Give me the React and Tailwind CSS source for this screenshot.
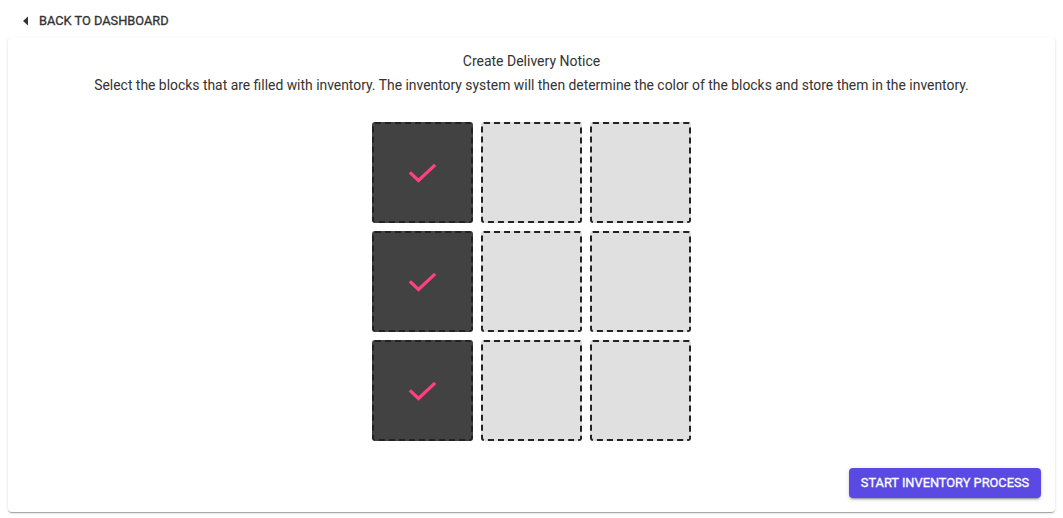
import React from "react";

const blocks = [true, false, false, true, false, false, true, false, false];

function Check() {
  return (
    <svg width="30" height="24" viewBox="0 0 30 24" fill="none">
      <path d="M3 12.5 L10.5 19.5 L26 5" stroke="#ff4081" strokeWidth="3.2" strokeLinecap="square" />
    </svg>
  );
}

export default function App() {
  return (
    <div className="min-h-[518px] bg-white px-2 pb-[6px] font-['Roboto','Liberation_Sans',sans-serif]">
      {/* back link */}
      <div className="h-[37px] pt-[4px] flex items-center">
        <button className="flex items-center gap-[8px] pl-[13px] pr-2 h-[30px] text-[12.8px] font-normal uppercase tracking-normal text-[#333] [-webkit-text-stroke:0.3px_#333]">
          <svg width="10" height="12" viewBox="0 0 10 12">
            <path d="M7 1.5 L2 6 L7 10.5 Z" fill="#333" />
          </svg>
          Back to dashboard
        </button>
      </div>

      {/* card */}
      <div className="bg-white rounded-[4px] shadow-[0_2px_1px_-1px_rgba(0,0,0,0.2),0_1px_1px_0_rgba(0,0,0,0.14),0_1px_3px_0_rgba(0,0,0,0.12)] pt-[14px] pb-[14px] px-[14px] flex flex-col">
        <div className="text-center text-[14px] leading-[20px] text-[#333]">Create Delivery Notice</div>
        <div className="text-center text-[13.9px] leading-[20px] text-[#333] mt-[4px]">
          Select the blocks that are filled with inventory. The inventory system will then determine the color of the blocks and store them in the inventory.
        </div>

        <div className="flex justify-center mt-[27px]">
          <div className="grid grid-cols-[101px_101px_101px] gap-[8px]">
            {blocks.map((filled, i) => (
              <div
                key={i}
                className={
                  filled
                    ? "w-[101px] h-[101px] rounded-[3px] border-2 border-dashed border-[#222] bg-[#424242] flex items-center justify-center"
                    : "w-[101px] h-[101px] rounded-[3px] border-2 border-dashed border-[#222] bg-[#e0e0e0]"
                }
              >
                {filled && <Check />}
              </div>
            ))}
          </div>
        </div>

        <div className="flex justify-end mt-[27px]">
          <button className="h-[30px] w-[192px] rounded-[4px] bg-[#5a4ae3] text-white text-[12.8px] font-normal uppercase tracking-normal [-webkit-text-stroke:0.3px_#fff] shadow-[0_3px_1px_-2px_rgba(0,0,0,0.2),0_2px_2px_0_rgba(0,0,0,0.14),0_1px_5px_0_rgba(0,0,0,0.12)]">
            Start inventory process
          </button>
        </div>
      </div>
    </div>
  );
}
